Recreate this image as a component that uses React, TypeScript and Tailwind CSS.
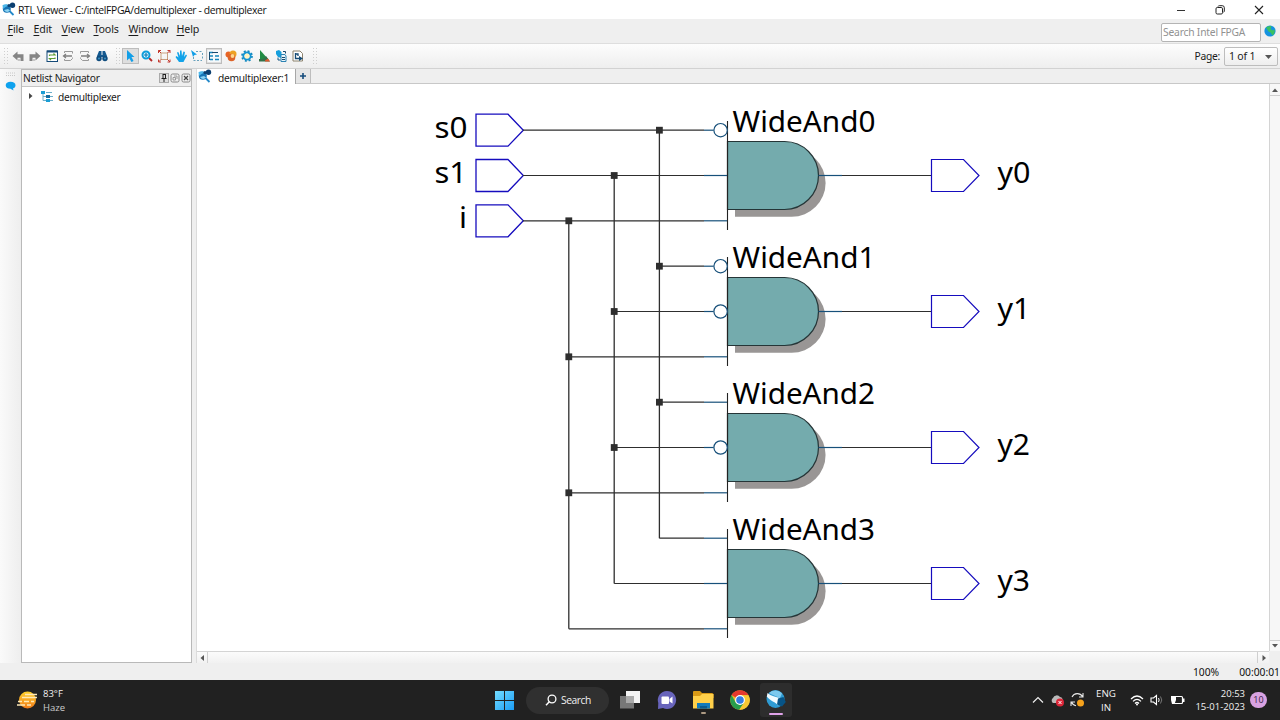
import type { ReactNode } from "react";

type IconProps = { children: ReactNode; w?: number; h?: number; box?: string; className?: string };

function Icon({ children, w = 16, h = 16, box, className = "" }: IconProps) {
  return (
    <svg width={w} height={h} viewBox={box ?? `0 0 ${w} ${h}`} className={`block shrink-0 ${className}`} fill="none">
      {children}
    </svg>
  );
}

function ViewerLogo() {
  return (
    <Icon w={15} h={15}>
      <path d="M8 8.500L12.500 13" stroke="#2389c9" strokeWidth="1.800" />
      <circle cx="5.800" cy="6.800" r="4" fill="#1673b4" />
      <path d="M1.500 3.200C4 1.500 7 2 8 4C6 3.800 4.500 5 2 7Z" fill="#4cb7ea" />
      <path d="M3 8C4.500 10.500 7.500 10.500 9 8.500L7 7Z" fill="#8bd3f2" />
      <circle cx="11.500" cy="3.200" r="2.700" fill="#0b3f70" />
      <circle cx="8" cy="3.500" r="1.600" fill="#0b3f70" />
    </Icon>
  );
}

function TitleBar() {
  return (
    <header className="flex h-[19px] items-center bg-white pl-[1px] text-[#111]">
      <ViewerLogo />
      <span className="ml-[2px] w-[260px] whitespace-nowrap pt-[1px] font-['Open_Sans',sans-serif] text-[10.4px] leading-[18px] tracking-[-0.38px]">
        RTL Viewer - C:/intelFPGA/demultiplexer - demultiplexer
      </span>
      <div className="ml-auto flex items-center gap-[29px] pr-[16px]">
        <Icon w={10} h={10}><path d="M1 5.500H9" stroke="#333" /></Icon>
        <Icon w={10} h={10}>
          <rect x="1" y="2.500" width="6.500" height="6.500" rx="1.300" stroke="#222" />
          <path d="M3 1.500Q3.300 .7 4.300 .7H7.300Q9.300 .7 9.300 2.700V6Q9.300 7 8.500 7.200" stroke="#222" />
        </Icon>
        <Icon w={10} h={10}><path d="M1 1L9 9M9 1L1 9" stroke="#222" strokeWidth="1.100" /></Icon>
      </div>
    </header>
  );
}

const menus = [
  { label: "File", w: "w-[26px]" },
  { label: "Edit", w: "w-[28px]" },
  { label: "View", w: "w-[32px]" },
  { label: "Tools", w: "w-[35px]" },
  { label: "Window", w: "w-[48px]" },
  { label: "Help", w: "w-[30px]" },
];

function MenuBar() {
  return (
    <nav className="flex h-[25px] border-b border-[#dedede] bg-[#efefef] pl-[7.5px]">
      {menus.map((m) => (
        <span key={m.label} className={`${m.w} whitespace-nowrap pt-[2px] text-[10.7px] leading-[16px] tracking-[-0.15px]`}>
          <span className="underline decoration-1 underline-offset-2">{m.label[0]}</span>
          {m.label.slice(1)}
        </span>
      ))}
      <div className="ml-auto flex items-start pt-[4px]">
        <div className="h-[19px] w-[100px] whitespace-nowrap rounded-[2px] border border-[#b4b4b4] bg-white pl-[1px] text-[10.3px] leading-[17px] tracking-[-0.2px] text-[#929292]">
          Search Intel FPGA
        </div>
        <Icon w={12} h={12} className="ml-[3px] mr-[4px] mt-[2px]">
          <circle cx="6" cy="6" r="5.600" fill="#1592df" />
          <path d="M2 2.500Q4 .5 7.500 1L6.500 4L9 5.500L10.500 4.500Q11.500 8 8.500 10.500L6.500 7.500L4.500 6.500Z" fill="#3ac161" />
        </Icon>
      </div>
    </nav>
  );
}

function Arrow({ flip = false }: { flip?: boolean }) {
  return (
    <Icon className={flip ? "-scale-x-100" : ""}>
      <path d="M2.500 8L7.500 3.500V6.300H13.500V13H10.500V9.800H7.500V12.500Z" fill="#858585" />
      <path d="M9 11V13" stroke="#999" />
    </Icon>
  );
}

function PageStep({ flip = false }: { flip?: boolean }) {
  return (
    <Icon className={flip ? "-scale-x-100" : ""}>
      <path d="M4.500 5V3.500H12.500V5.500M4.500 11V12.500H10.500L12.500 10.500V9.500" stroke="#999" />
      <path d="M3.500 8H12M6 6L3.500 8L6 10" stroke="#808080" strokeWidth="1.300" />
    </Icon>
  );
}

function Grip() {
  return (
    <Icon w={6} h={18}>
      <path d="M1.500 1V17M4.500 1V17" stroke="#cfcfcf" strokeDasharray="1 2" />
    </Icon>
  );
}

const leftTools: ReactNode[] = [
  <Arrow />,
  <Arrow flip />,
  <Icon>
    <rect x="3" y="3" width="10.500" height="10.500" fill="white" stroke="#144a78" />
    <path d="M3 3.500H13.500" stroke="#144a78" strokeWidth="2" />
    <path d="M5.500 8V7H11L9.500 5.500M11 9.500V10.500H5.500L7 12" stroke="#5d9d35" strokeWidth="1.200" />
  </Icon>,
  <PageStep />,
  <PageStep flip />,
  <Icon>
    <path d="M5 3H7.500V7H8.500V3H11L13 8V12H9V9H7V12H3V8Z" fill="#145990" />
    <circle cx="5" cy="10.500" r="2.700" fill="#104c7d" />
    <circle cx="11" cy="10.500" r="2.700" fill="#104c7d" />
    <circle cx="5" cy="10.500" r="1" fill="#3793ca" />
    <circle cx="11" cy="10.500" r="1" fill="#3793ca" />
  </Icon>,
];

const rightTools: { icon: ReactNode; on?: boolean }[] = [
  { on: true, icon: <Icon><path d="M5 2L12.500 9H9.500L11.500 13L9.500 14L7.300 10.300L5 12.500Z" fill="#129fe8" /></Icon> },
  {
    icon: (
      <Icon>
        <path d="M10 10L13 13" stroke="#b52828" strokeWidth="1.800" />
        <circle cx="7" cy="7" r="3.500" fill="#dff5ff" stroke="#0d9ddb" strokeWidth="2" />
        <path d="M5 7H9M7 5V9" stroke="#087bb5" strokeWidth="1.200" />
      </Icon>
    ),
  },
  {
    icon: (
      <Icon>
        <rect x="5" y="5" width="6.500" height="6.500" stroke="#c9a17e" />
        <path d="M2.500 5V2.500H5M2.500 2.500L5 5M11.500 2.500H14V5M14 2.500L11.500 5M2.500 11.500V14H5M2.500 14L5 11.500M14 11.500V14H11.500M14 14L11.500 11.500" stroke="#c4382e" />
      </Icon>
    ),
  },
  {
    icon: (
      <Icon>
        <path d="M6 14L2.500 9L3.500 8L5.500 9.500L4 4.500L5.300 4L7 8L7 2.500H8.500L9 8L10.500 3.500L12 4L11 9L13 6.500L14 7.500L11.500 12L10.500 14Z" fill="#12a3e9" />
      </Icon>
    ),
  },
  {
    icon: (
      <Icon>
        <path d="M7 3.500H13M13.500 5V12M4.500 9V12.500H13" stroke="#6aa2bd" strokeDasharray="2 1.500" />
        <path d="M2 2L8 6.500L5.500 7L4 9Z" fill="#129fe8" />
      </Icon>
    ),
  },
  {
    on: true,
    icon: (
      <Icon>
        <rect x="1.500" y="2" width="13" height="12" fill="#f5f9fb" />
        <path d="M3 4.500H7M4 8H7M4 11.500H7M9 8H13M9 11.500H13" stroke="#1686bd" strokeWidth="1.400" />
        <path d="M6 4.500H12M3.500 4V12" stroke="#174b70" />
      </Icon>
    ),
  },
  {
    icon: (
      <Icon>
        <circle cx="5.500" cy="6.500" r="3" fill="#e76325" />
        <circle cx="10" cy="6" r="3.500" fill="#eda224" />
        <circle cx="8.500" cy="9.500" r="3.800" fill="#dd6429" />
        <circle cx="9.500" cy="8" r="1.900" fill="#ffd88f" />
      </Icon>
    ),
  },
  {
    icon: (
      <Icon>
        <circle cx="8" cy="8" r="5" stroke="#1588bc" strokeWidth="1.700" strokeDasharray="2 1.927" />
        <circle cx="8" cy="8" r="3.600" stroke="#1394d2" strokeWidth="2" />
        <circle cx="8" cy="8" r="2.500" fill="#fff4c2" />
      </Icon>
    ),
  },
  {
    icon: (
      <Icon>
        <path d="M4 2L12 11H4Z" fill="#218b43" />
        <path d="M3 13.500H14L10 8L7 11H3Z" fill="#34704a" />
        <path d="M9 12.500L12 10.500L14 13.500H9Z" fill="#df582d" />
      </Icon>
    ),
  },
  {
    icon: (
      <Icon>
        <path d="M3 3L6 2L8.500 4V10L5 9L3 6Z" fill="#169fdd" />
        <path d="M5 9.500V12H7.500" stroke="#185886" />
        <path d="M8 6.500H12L13 8V13.500H8Z" fill="#e9f4fa" stroke="#2b82b2" />
        <path d="M10 3.500H12.500V5.500M9 9.500H12M9 11.500H12" stroke="#174b70" />
      </Icon>
    ),
  },
  {
    icon: (
      <Icon>
        <path d="M3 3H10L12.500 5.500V13H3Z" fill="white" stroke="#8c826d" />
        <path d="M5.500 5V10.500H10M5.500 6H8V8" stroke="#164b74" strokeWidth="1.300" />
        <path d="M9 8L13 10.500L9 13Z" fill="#164b74" />
      </Icon>
    ),
  },
];

function ToolBar() {
  return (
    <div className="flex h-[25px] items-center border-b border-[#d2d2d2] bg-gradient-to-b from-[#fdfdfd] to-[#eeeeee]">
      <div className="ml-[3px]"><Grip /></div>
      <div className="ml-[1px] grid w-[100px] grid-cols-6">
        {leftTools.map((t, i) => (
          <div key={i} className="flex h-[17px] items-center justify-center">{t}</div>
        ))}
      </div>
      <div className="ml-[5px]"><Grip /></div>
      <div className="ml-[1px] grid w-[184px] grid-cols-11">
        {rightTools.map((t, i) => (
          <div
            key={i}
            className={`flex h-[16px] items-center justify-center ${t.on ? "bg-[#dedede] outline outline-1 -outline-offset-1 outline-[#bdbdbd]" : ""}`}
          >
            {t.icon}
          </div>
        ))}
      </div>
      <div className="ml-[6px]"><Grip /></div>
      <span className="ml-auto pt-[1px] text-[10.3px] tracking-[-0.3px]">Page:</span>
      <div className="ml-[4px] mr-[2px] flex h-[19px] w-[54px] items-center justify-between whitespace-nowrap rounded-[2px] border border-[#bdbdbd] bg-gradient-to-b from-white to-[#eeeeee] pl-[4px] pr-[5px] pt-[1px] text-[10.5px] leading-[17px] tracking-[-0.2px]">
        1 of 1
        <Icon w={7} h={4}><path d="M0 0H7L3.500 4Z" fill="#555" /></Icon>
      </div>
    </div>
  );
}

function Navigator() {
  return (
    <section className="flex w-[171px] flex-col border border-[#b9b9b9] bg-white">
      <div className="flex h-[17px] items-center border-b border-[#c5c5c5] bg-[#efefef] pl-[1px]">
        <span className="whitespace-nowrap text-[10.2px] leading-[16px] tracking-[-0.25px]">Netlist Navigator</span>
        <div className="ml-auto flex gap-[1px]">
          <Icon w={10} h={10} className="bg-[#dfdfdf]">
            <rect x=".5" y=".5" width="9" height="9" stroke="#aaa" />
            <path d="M3.500 1.500H7M4 2V5M6.500 2V5M2.500 5.500H7.500M5 5.500V9" stroke="#222" />
          </Icon>
          <Icon w={10} h={10}>
            <rect x="1" y="1" width="8" height="8" rx="1.500" stroke="#888" />
            <path d="M4 3H7V6M3 4.500H5.500V7H3Z" stroke="#888" strokeWidth=".8" />
          </Icon>
          <Icon w={10} h={10}>
            <rect x="1" y="1" width="8" height="8" rx="1.500" stroke="#888" />
            <path d="M3 3L7 7M7 3L3 7" stroke="#444" strokeWidth="1.200" />
          </Icon>
        </div>
      </div>
      <div className="flex h-[18px] items-center pl-[6px]">
        <Icon w={5} h={8}><path d="M1 1L4.500 4L1 7Z" fill="#444" /></Icon>
        <Icon w={13} h={13} className="ml-[7px]">
          <path d="M3 2V10.500H7M3 6.500H7" stroke="#6caeca" />
          <rect x="1" y="1" width="4" height="3" fill="#1a9ed5" />
          <rect x="6" y="5" width="4" height="3" fill="#156ca0" />
          <rect x="6" y="9" width="4" height="3" fill="#1a9ed5" />
          <path d="M6 2.500H12M10 6.500H13M10 10.500H13" stroke="#6caeca" />
        </Icon>
        <span className="ml-[5px] pt-[1px] text-[10.2px] leading-[16px] tracking-[-0.3px]">demultiplexer</span>
      </div>
    </section>
  );
}

function TabStrip() {
  return (
    <div className="flex h-[15px] border-b border-[#c8c8c8] bg-[#efefef]">
      <div className="flex h-[16px] w-[99px] items-center border-r border-b border-[#a7a7a7] bg-white">
        <div className="pb-[1px]"><ViewerLogo /></div>
        <span className="ml-[6px] whitespace-nowrap pt-[2px] text-[10.2px] leading-[14px] tracking-[-0.25px]">demultiplexer:1</span>
      </div>
      <div className="flex w-[15px] items-center justify-center border-r border-[#bdbdbd] bg-[#e6e6e6]">
        <Icon w={8} h={8}><path d="M4 1V7M1 4H7" stroke="#164c7c" strokeWidth="1.600" /></Icon>
      </div>
    </div>
  );
}

const WIRE = "#2e2e2e";
const PIN = "#17507a";
const PORT = "#160cbe";
const PITCH = 136;

const gates = [
  { name: "WideAnd0", out: "y0", len: 143, outLen: 33, inverted: [true, false, false] },
  { name: "WideAnd1", out: "y1", len: 143, outLen: 33, inverted: [true, true, false] },
  { name: "WideAnd2", out: "y2", len: 142.5, outLen: 32.5, inverted: [false, true, false] },
  { name: "WideAnd3", out: "y3", len: 142.5, outLen: 32.5, inverted: [false, false, false] },
];

const inputs = [
  { name: "s0", y: 130.2, bus: 659.4, base: 137.6, x: 434.5, len: 33 },
  { name: "s1", y: 175.5, bus: 614.2, base: 182.6, x: 434.5, len: 32.5 },
  { name: "i", y: 220.8, bus: 568.8, base: 227.8, x: 459, len: 8 },
];

function Schematic() {
  return (
    <svg viewBox="197 84 1072 567" width="1072" height="567" className="block bg-white" fill="none">
      <g fontFamily="'Noto Sans', sans-serif" fontSize="29" fill="#000">
        {inputs.map((p) => (
          <text key={p.name} x={p.x} y={p.base} textLength={p.len} lengthAdjust="spacingAndGlyphs">{p.name}</text>
        ))}
        {gates.map((g, n) => (
          <g key={g.name}>
            <text x="732.500" y={131.600 + n * PITCH} textLength={g.len} lengthAdjust="spacingAndGlyphs">{g.name}</text>
            <text x="997.500" y={182.500 + n * PITCH} textLength={g.outLen} lengthAdjust="spacingAndGlyphs">{g.out}</text>
          </g>
        ))}
      </g>
      {inputs.map((p) => (
        <g key={p.name}>
          <path d={`M${p.bus} ${p.y}V${p.y + 3 * PITCH}`} stroke={WIRE} strokeWidth="1.300" />
          <path d={`M476 ${p.y - 16}H508L523.300 ${p.y}L508 ${p.y + 16}H476Z`} stroke={PORT} strokeWidth="1.300" />
        </g>
      ))}
      {gates.map((g, n) => {
        const dy = n * PITCH;
        const mid = 175.500 + dy;
        return (
          <g key={g.name}>
            <path d={`M735 ${mid - 26.500}H791.700A33.900 33.900 0 0 1 791.700 ${mid + 41.300}H735Z`} fill="#999695" />
            <path d={`M727.500 ${mid - 34}H784.500A34 34 0 0 1 784.500 ${mid + 34}H727.500Z`} fill="#74abad" stroke="#253537" strokeWidth="1.200" />
            <path d={`M727.500 ${mid - 54.500}V${mid + 54.500}`} stroke="#222" strokeWidth="1.100" />
            {inputs.map((p, k) => {
              const y = p.y + dy;
              const end = g.inverted[k] ? 713.700 : 727;
              return (
                <g key={p.name}>
                  <path d={`M${n === 0 ? 523 : p.bus} ${y}H704`} stroke={WIRE} strokeWidth="1.200" />
                  <path d={`M704 ${y}H${end}`} stroke={PIN} strokeWidth="1.200" />
                  {g.inverted[k] && <circle cx="720.600" cy={y} r="6.700" fill="white" stroke={PIN} strokeWidth="1.200" />}
                  {n < 3 && <rect x={p.bus - 3.400} y={y - 3.400} width="6.800" height="6.800" fill={WIRE} />}
                </g>
              );
            })}
            <path d={`M818.500 ${mid}H842`} stroke={PIN} strokeWidth="1.200" />
            <path d={`M842 ${mid}H931`} stroke={WIRE} strokeWidth="1.200" />
            <path d={`M931.500 ${mid - 16}H963.500L979 ${mid}L963.500 ${mid + 16}H931.500Z`} stroke={PORT} strokeWidth="1.200" />
          </g>
        );
      })}
    </svg>
  );
}

function ScrollArrow({ d }: { d: string }) {
  return <Icon w={8} h={8}><path d={d} fill="#555" /></Icon>;
}

function Workspace() {
  return (
    <main className="flex h-[594px] bg-[#efefef]">
      <aside className="flex w-[21px] flex-col items-center bg-gradient-to-r from-[#fafafa] to-[#eeeeee] pt-[3px]">
        <Icon w={10} h={5}><path d="M0 1H10M0 3.500H10" stroke="#c8c8c8" strokeDasharray="1 1" /></Icon>
        <Icon w={11} h={10} className="mt-[4px]">
          <path d="M5.500 .8C8.500 .8 10.500 2 10.500 4.300C10.500 6.300 9.300 7.100 8 7.500L8.500 9.500L5.500 7.800C2.700 7.800 .7 6.700 .7 4.300C.7 2 2.700 .8 5.500 .8Z" fill="#0fa2ee" />
        </Icon>
      </aside>
      <Navigator />
      <div className="ml-[4px] flex w-[1084px] flex-col border-l border-[#dcdcdc]">
        <TabStrip />
        <div className="flex h-[567px]">
          <Schematic />
          <div className="flex w-[11px] flex-col items-center justify-between border-l border-[#d4d4d4] bg-[#f7f7f7]">
            <div className="flex h-[12px] w-full items-center justify-center border-b border-[#cfcfcf]"><ScrollArrow d="M1 6L4 2.500L7 6Z" /></div>
            <div className="flex h-[11px] w-full items-center justify-center border-t border-[#cfcfcf]"><ScrollArrow d="M1 2L4 5.500L7 2Z" /></div>
          </div>
        </div>
        <div className="flex h-[12px] w-[1072px] justify-between border-t border-[#d4d4d4] bg-gradient-to-b from-[#fbfbfb] to-[#f1f1f1]">
          <div className="flex w-[11px] items-center justify-center border-r border-[#cfcfcf]"><ScrollArrow d="M6 1L2.500 4L6 7Z" /></div>
          <div className="flex w-[12px] items-center justify-center border-l border-[#cfcfcf]"><ScrollArrow d="M2.500 1L6 4L2.500 7Z" /></div>
        </div>
      </div>
    </main>
  );
}

function TaskBar() {
  return (
    <footer className="flex h-[40px] items-center bg-[#212121] font-['Open_Sans',sans-serif] text-[9.5px] text-[#f1f1f1]">
      <Icon w={21} h={20} className="ml-[17px]">
        <defs>
          <linearGradient id="sun" x1="0" y1="0" x2="0" y2="1">
            <stop stopColor="#ffd12c" /><stop offset="1" stopColor="#ef7b1a" />
          </linearGradient>
        </defs>
        <circle cx="10.500" cy="10" r="8.500" fill="url(#sun)" />
        <path d="M8 4.500H20M5 7.500H16M13 7.500H20M1 11.500H5M7 11.500H12M14 11.500H17M0 15H8M10 15H14" stroke="#ffe9b5" strokeWidth="1.300" />
      </Icon>
      <div className="ml-[5px] w-[60px] pt-[1px] leading-[13.500px]">
        <div>83°F</div>
        <div className="text-[#ccc]">Haze</div>
      </div>
      <div className="ml-[392px] flex items-center">
        <Icon w={19} h={19}>
          <defs>
            <linearGradient id="win" x1="0" y1="0" x2="1" y2="1">
              <stop stopColor="#73dcff" /><stop offset="1" stopColor="#1b9cf4" />
            </linearGradient>
          </defs>
          <path d="M0 0H9V9H0ZM10 0H19V9H10ZM0 10H9V19H0ZM10 10H19V19H10Z" fill="url(#win)" />
        </Icon>
        <div className="ml-[12px] flex h-[27px] w-[83px] items-center rounded-full bg-[#303030] pl-[19px] text-[10.3px] tracking-[-0.45px]">
          <Icon w={12} h={12}><circle cx="7" cy="5" r="3.900" stroke="white" strokeWidth="1.300" /><path d="M4.300 7.800L1 11.200" stroke="white" strokeWidth="1.500" /></Icon>
          <span className="ml-[4px] pt-[1px]">Search</span>
        </div>
        <Icon w={20} h={20} className="ml-[11px]">
          <rect x="6" y="1" width="14" height="12" fill="#f3f3f3" />
          <rect x="0" y="6" width="14" height="12.500" fill="#777" />
          <rect x="6" y="6" width="8" height="7" fill="#aaa" />
        </Icon>
        <Icon w={20} h={20} className="ml-[17px]">
          <path d="M10 1A9 9 0 1 1 6 18L1 19L1.300 13A9 9 0 0 1 10 1Z" fill="#6864bb" />
          <rect x="4.500" y="6.500" width="7.500" height="7.500" rx="1" fill="white" />
          <path d="M12.500 9L15.500 6.500V13.500L12.500 11.500Z" fill="white" />
        </Icon>
        <Icon w={21} h={28} className="ml-[16px]">
          <path d="M0 6Q0 5 1 5H7L9 7H19Q20.500 7 20.500 8.500V12H0Z" fill="#d99a16" />
          <path d="M0 10H7L9 8H20.500V22.500H0Z" fill="#ffd04a" />
          <path d="M4 17H17V22.500H4Z" fill="#137abb" />
          <path d="M7 20H14V22.500H7Z" fill="#0a5b91" />
          <rect x="8" y="26" width="5" height="2" rx="1" fill="#ad9a83" />
        </Icon>
        <Icon w={20} h={20} className="ml-[16px]">
          <circle cx="10" cy="10" r="9.800" fill="#e7b827" />
          <path d="M10 10L1.500 5.100A9.800 9.800 0 0 1 18.500 5.100H10Z" fill="#e5392d" />
          <path d="M1.500 5.100A9.800 9.800 0 0 0 9.300 19.800L14.200 12.500L10 14.500L5.700 12.500Z" fill="#289e4c" />
          <path d="M10 5.400H18.600A9.800 9.800 0 0 1 9.300 19.800L14.200 12.500Z" fill="#f8c832" />
          <circle cx="10" cy="10" r="4.900" fill="white" />
          <circle cx="10" cy="10" r="3.800" fill="#347de1" />
        </Icon>
        <div className="ml-[10px] flex h-[34px] w-[32px] flex-col items-center rounded-[3px] bg-[#2d2d2d] pt-[6px]">
          <Icon w={20} h={20}>
            <circle cx="9.500" cy="10" r="9" fill="#2f9bd3" />
            <path d="M3 4C7 0 13 1 16 4.500L14 9C10 7 6 6 3 4Z" fill="#7cc9ee" />
            <path d="M1.500 4C5 7 10 8 14 9L12 16.500C10 13 4 12 .8 7.500Z" fill="#f2fbff" />
            <path d="M12 9.500L17.500 8L19.800 13L16 17.500L11 15.500Z" fill="#075487" />
          </Icon>
          <div className="mt-[4px] h-[2px] w-[14px] rounded-full bg-[#dfa2e9]" />
        </div>
      </div>
      <div className="ml-auto flex items-center">
        <Icon w={12} h={8}><path d="M1 6.500L6 1.500L11 6.500" stroke="#eee" strokeWidth="1.200" /></Icon>
        <Icon w={15} h={13} className="ml-[6px]">
          <path d="M3 9A3 3 0 0 1 3 4A4 4 0 0 1 10 3A3 3 0 0 1 12 8L9 9Z" fill="#bababa" />
          <circle cx="10" cy="8.500" r="4" fill="#dc2638" />
          <path d="M8.500 7L11.500 10M11.500 7L8.500 10" stroke="white" />
        </Icon>
        <Icon w={15} h={16} className="ml-[5px]">
          <path d="M2 5A6 6 0 0 1 12.500 4.500M13 1V5H9M1.500 10A6 6 0 0 0 6 13.700M1 14V10H5" stroke="#e8e8e8" strokeWidth="1.100" />
          <circle cx="10.500" cy="11" r="3.500" fill="#f6a21c" />
        </Icon>
        <div className="ml-[8px] w-[26px] pt-[1px] text-center text-[9.800px] leading-[13.500px]">
          <div>ENG</div>
          <div>IN</div>
        </div>
        <Icon w={14} h={13} className="ml-[11px]">
          <path d="M1 5Q7 -1 13 5M3 7.300Q7 3.300 11 7.300M5 9.500Q7 7.500 9 9.500" stroke="white" strokeWidth="1.200" />
          <circle cx="7" cy="10.500" r="1" fill="white" />
        </Icon>
        <Icon w={14} h={12} className="ml-[6px]">
          <path d="M1 4H3.500L6.500 1.500V10.500L3.500 8H1Z" stroke="white" strokeWidth="1.100" />
          <path d="M8.500 4Q9.800 6 8.500 8" stroke="white" />
          <path d="M10.500 2.500Q13 6 10.500 9.500" stroke="#777" />
        </Icon>
        <Icon w={15} h={12} className="ml-[6px]">
          <rect x="4" y="2.500" width="8.500" height="7" rx="1" stroke="white" strokeWidth="1.200" />
          <rect x="13" y="4.500" width="1.500" height="3.500" fill="white" />
          <path d="M1 2H6V6L4.500 10H2L1 6Z" fill="white" />
        </Icon>
        <div className="ml-[5px] w-[55px] whitespace-nowrap text-right leading-[13.500px]">
          <div>20:53</div>
          <div>15-01-2023</div>
        </div>
        <div className="ml-[5px] mr-[13px] h-[16px] w-[17px] rounded-full bg-[#d9a2e2] text-center text-[9px] leading-[16px] text-[#35203b]">10</div>
      </div>
    </footer>
  );
}

export default function App() {
  return (
    <div className="flex h-[720px] w-[1280px] flex-col overflow-hidden bg-[#efefef] font-['Noto_Sans',sans-serif] text-[#1b1b1b]">
      <TitleBar />
      <MenuBar />
      <ToolBar />
      <Workspace />
      <div className="flex h-[17px] items-center justify-end bg-[#efefef] pt-[2px] text-[10.3px] leading-[15px] text-[#111]">
        <span>100%</span>
        <span className="ml-[20px]">00:00:01</span>
      </div>
      <TaskBar />
    </div>
  );
}
